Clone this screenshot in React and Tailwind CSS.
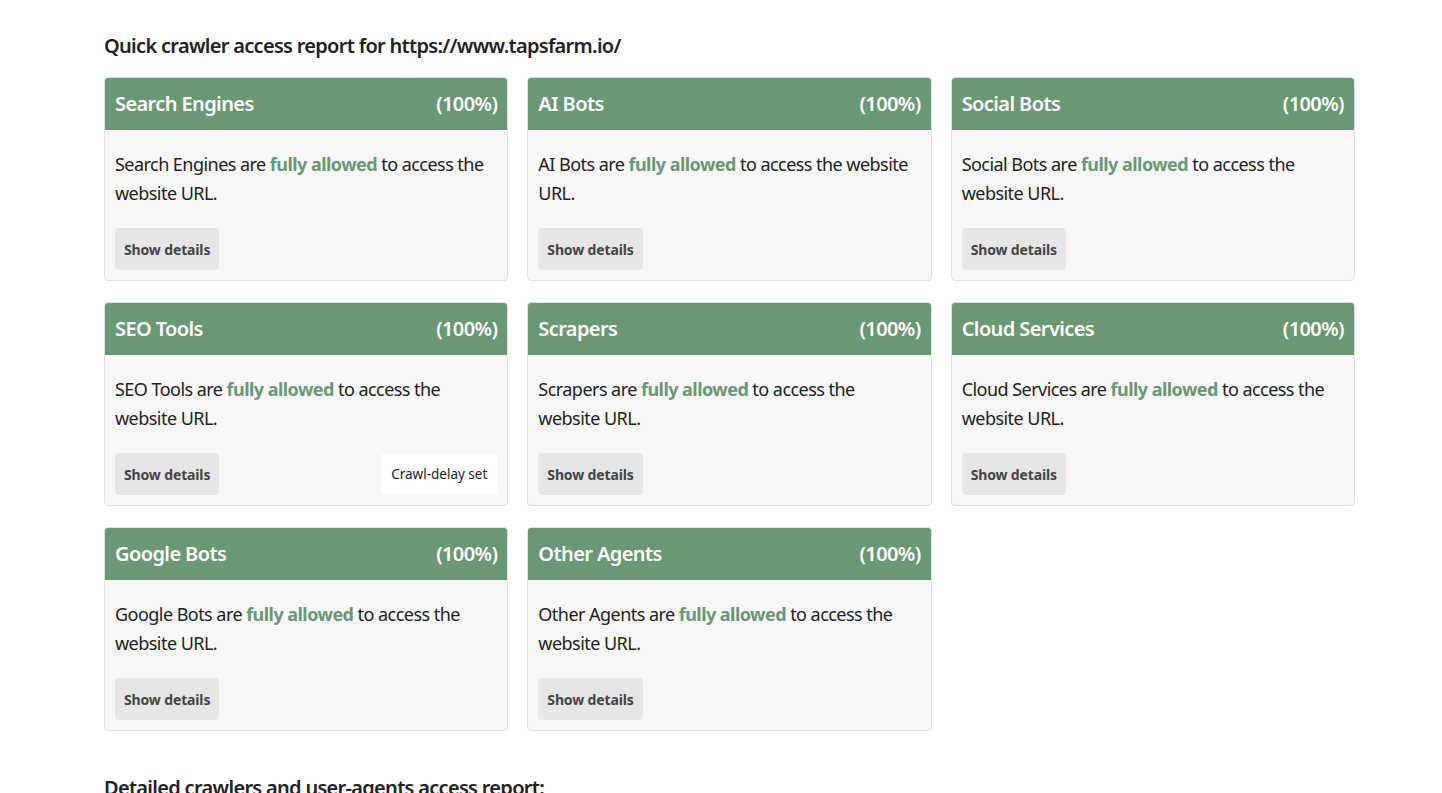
import React from "react";

const cards = [
  { name: "Search Engines" },
  { name: "AI Bots" },
  { name: "Social Bots" },
  { name: "SEO Tools", delay: true },
  { name: "Scrapers" },
  { name: "Cloud Services" },
  { name: "Google Bots" },
  { name: "Other Agents" },
];

function Card({ name, delay }) {
  return (
    <div className="h-[204px] rounded-[4px] border border-[#e0e0e0] bg-[#f7f7f7] overflow-hidden flex flex-col">
      <div className="h-[52px] bg-[#6a9774] flex items-center justify-between px-[10px] text-white text-[20px] font-semibold tracking-[-0.03em]">
        <span>{name}</span>
        <span>(100%)</span>
      </div>
      <div className="pl-[10px] pr-[14px] pt-[20px] text-[18px] leading-[29px] text-[#222] tracking-[-0.03em]">
        {name} are <b className="text-[#6a9774] font-bold">fully allowed</b> to access the website URL.
      </div>
      <div className="flex items-center justify-between px-[10px] mt-[20px]">
        <button className="h-[42px] px-[9px] rounded-[4px] bg-[#e6e6e6] text-[14px] font-bold text-[#444] tracking-[-0.01em]">
          Show details
        </button>
        {delay && (
          <span className="h-[42px] px-[10px] rounded-[5px] bg-white text-[13.5px] text-[#222] flex items-center">
            Crawl-delay set
          </span>
        )}
      </div>
    </div>
  );
}

export default function App() {
  return (
    <div
      className="w-[1442px] h-[793px] overflow-hidden bg-white text-[#222]"
      style={{ fontFamily: '"Noto Sans", "Open Sans", sans-serif' }}
    >
      <div className="ml-[104px] w-[1251px] pt-[31px]">
        <h2 className="text-[20px] font-semibold leading-[30px] mb-[16px] tracking-[-0.035em]">
          Quick crawler access report for https://www.tapsfarm.io/
        </h2>
        <div className="grid grid-cols-3 gap-x-[19px] gap-y-[21px]">
          {cards.map((c) => (
            <Card key={c.name} {...c} />
          ))}
        </div>
        <h2 className="text-[20px] font-semibold leading-[30px] mt-[42px] tracking-[-0.035em]">
          Detailed crawlers and user-agents access report:
        </h2>
      </div>
    </div>
  );
}
